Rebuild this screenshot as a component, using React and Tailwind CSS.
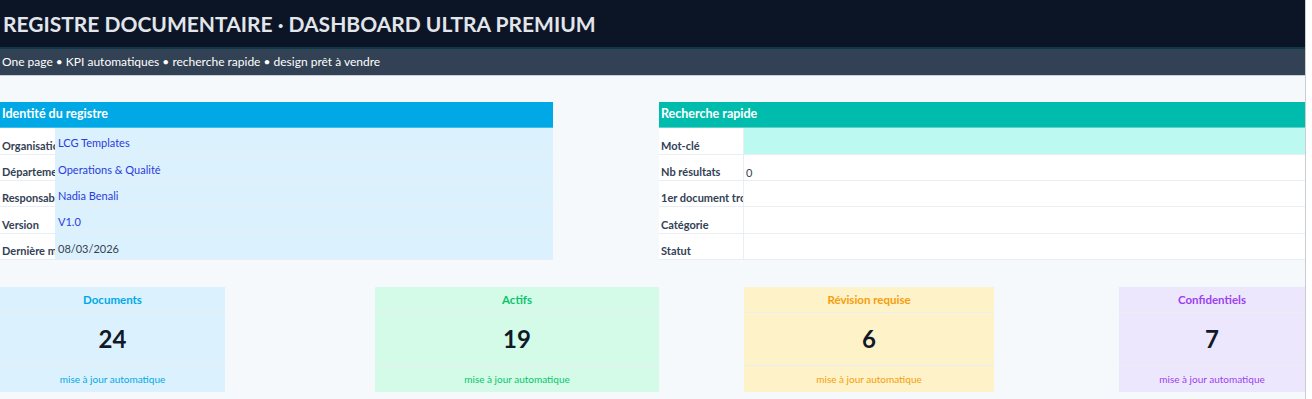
import React from "react";

const F = { fontFamily: "Lato, 'Noto Sans', sans-serif" };

const leftRows = [
  { label: "Organisation", value: "LCG Templates", blue: true, h: "h-[27px]" },
  { label: "Département", value: "Operations & Qualité", blue: true, h: "h-[26px]" },
  { label: "Responsable", value: "Nadia Benali", blue: true, h: "h-[26px]" },
  { label: "Version", value: "V1.0", blue: true, h: "h-[27px]" },
  { label: "Dernière modification", value: "08/03/2026", blue: false, h: "h-[26px]" },
];

const rightRows = [
  { label: "Mot-clé", value: "", bg: "bg-[#bcf9f0]", h: "h-[27px]" },
  { label: "Nb résultats", value: "0", bg: "bg-white", h: "h-[26px]" },
  { label: "1er document trouvé", value: "", bg: "bg-white", h: "h-[26px]" },
  { label: "Catégorie", value: "", bg: "bg-white", h: "h-[27px]" },
  { label: "Statut", value: "", bg: "bg-white", h: "h-[26px]" },
];

function Kpi({ w, bg, color, title, value }) {
  return (
    <div className={`${w} ${bg} flex flex-col`}>
      <div className={`h-[26px] flex items-center justify-center text-[11.5px] font-bold border-b border-[#eaeef3] ${color}`}>
        {title}
      </div>
      <div className="h-[53px] flex items-center justify-center text-[24px] font-bold text-[#111827] border-b border-[#eaeef3]">
        {value}
      </div>
      <div className={`h-[26px] flex items-center justify-center text-[10px] ${color}`}>
        mise à jour automatique
      </div>
    </div>
  );
}

export default function App() {
  return (
    <div className="w-[1312px] h-[399px] bg-white flex overflow-hidden" style={F}>
      <div className="w-[1306px] shrink-0 bg-[#f5f9fc] border-r border-[#c9ced4] flex flex-col">
        {/* Title */}
        <div className="h-[49px] shrink-0 bg-[#0b1526] border-b-2 border-[#10384b] flex items-center pl-[3px]">
          <span className="text-[21px] font-bold text-[#e2e5ea] leading-none">
            REGISTRE DOCUMENTAIRE · DASHBOARD ULTRA PREMIUM
          </span>
        </div>
        {/* Subtitle */}
        <div className="h-[27px] shrink-0 bg-[#334155] border-b border-[#c7d0da] flex items-center pl-[2px]">
          <span className="text-[12px] text-white leading-none">
            One page • KPI automatiques • recherche rapide • design prêt à vendre
          </span>
        </div>
        <div className="h-[26px] shrink-0" />
        {/* Panels */}
        <div className="flex h-[158px] shrink-0">
          <div className="w-[553px] flex flex-col">
            <div className="h-[26px] bg-[#00a9e6] flex items-center pl-[2px] border-b border-[#3cc0ee]">
              <span className="text-[12.5px] font-bold text-white">Identité du registre</span>
            </div>
            {leftRows.map((r) => (
              <div key={r.label} className={`${r.h} flex border-b border-[#e8eef3]`}>
                <div className="w-[55px] shrink-0 bg-white overflow-hidden whitespace-nowrap flex items-end pl-[2px] pb-[2px]">
                  <span className="text-[11px] leading-[12px] font-bold text-[#334155]">{r.label}</span>
                </div>
                <div className="flex-1 bg-[#dbf1fd] pl-[3px] pt-[1px]">
                  <span className={`text-[11px] leading-[16px] ${r.blue ? "text-[#2b3be0]" : "text-[#374151]"}`}>{r.value}</span>
                </div>
              </div>
            ))}
          </div>
          <div className="w-[106px]" />
          <div className="flex-1 flex flex-col">
            <div className="h-[26px] bg-[#00bcad] flex items-center pl-[2px] border-b border-[#5cd3c8]">
              <span className="text-[12.5px] font-bold text-white">Recherche rapide</span>
            </div>
            {rightRows.map((r) => (
              <div key={r.label} className={`${r.h} flex border-b border-[#e8eef3]`}>
                <div className="w-[85px] shrink-0 bg-white overflow-hidden whitespace-nowrap flex items-end pl-[2px] pb-[2px] border-r border-[#e8eef3]">
                  <span className="text-[11px] leading-[12px] font-bold text-[#334155]">{r.label}</span>
                </div>
                <div className={`flex-1 ${r.bg} pl-[2px] pt-[4px]`}>
                  <span className="text-[11px] leading-[16px] text-[#374151]">{r.value}</span>
                </div>
              </div>
            ))}
          </div>
        </div>
        <div className="h-[27px] shrink-0" />
        {/* KPIs */}
        <div className="flex shrink-0">
          <Kpi w="w-[225px]" bg="bg-[#dbf1fd]" color="text-[#00a9e6]" title="Documents" value="24" />
          <div className="w-[150px]" />
          <Kpi w="w-[284px]" bg="bg-[#d3fbe8]" color="text-[#0ac46c]" title="Actifs" value="19" />
          <div className="w-[85px]" />
          <Kpi w="w-[250px]" bg="bg-[#fef2c8]" color="text-[#f59e0b]" title="Révision requise" value="6" />
          <div className="w-[125px]" />
          <Kpi w="flex-1" bg="bg-[#ede7fe]" color="text-[#9b3ff0]" title="Confidentiels" value="7" />
        </div>
      </div>
    </div>
  );
}
